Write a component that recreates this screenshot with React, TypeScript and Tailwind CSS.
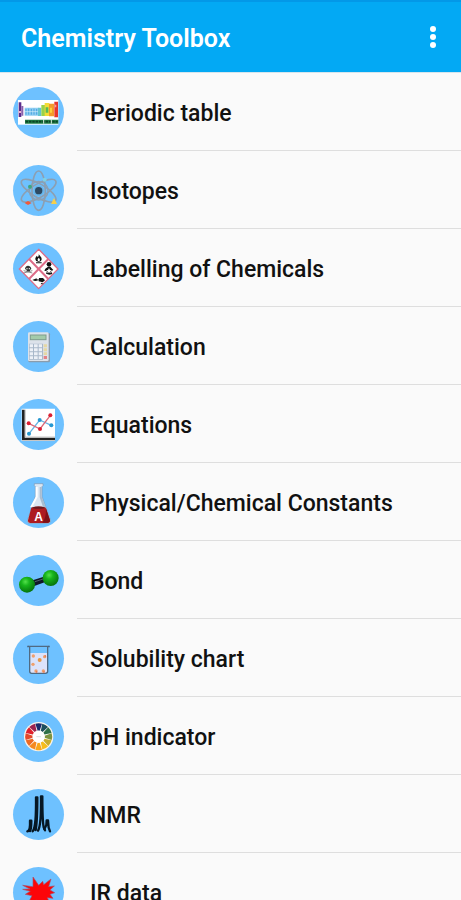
import type { ReactNode } from "react";

/* Every picture is drawn on a 153 x 153 canvas, clipped to its round badge. */

const atomAngles = [0, 60, 120];
const wheelColors = [
  "#1b2a6b", "#1d4f5c", "#2f7048", "#7d9440", "#c9ae2c", "#f6bd1c",
  "#f9a71a", "#f58a1f", "#ee6a22", "#e5482a", "#e0202c", "#9c2350",
];

const PeriodicTableArt = () => (
  <g>
    <rect x="15" y="39" width="121" height="74" fill="#fff" />
    <path d="M17 46h8v44h-8z" fill="#5b2c8c" />
    <path d="M25 57h6v29h-6z" fill="#8a63ad" />
    <path d="M18 72h6v6h-6z" fill="#f0b4d0" />
    <path d="M35 62h42v24H35z" fill="#8fcdf2" />
    <path d="M39 66v17M47 65v18M55 66v17M63 65v18M71 66v17" stroke="#4aa5e0" strokeWidth="3" />
    <path d="M35 74h40" stroke="#d8effc" strokeWidth="2" />
    <path d="M75 62h10v25H75z" fill="#64c4cf" />
    <path d="M85 54h12v33H85z" fill="#9bd24a" />
    <path d="M95 48h14v39H95z" fill="#f2dc37" />
    <path d="M98 61h8v16h-8z" fill="#58b957" />
    <path d="M108 50h15v38h-15z" fill="#f59a2a" />
    <path d="M111 62h6v15h-6z" fill="#fbd13c" />
    <path d="M124 44h11v47h-11z" fill="#e8352c" />
    <path d="M125 53h5v8h-5z" fill="#f9a08f" />
    <path d="M36 98h100v12H36z" fill="#1f7a45" />
    <path d="M38 104h96" stroke="#0b4225" strokeWidth="5" strokeDasharray="7 3" />
    <path d="M92 96v14M115 96v14" stroke="#d9efdf" strokeWidth="3" />
  </g>
);

const IsotopesArt = () => (
  <g fill="none">
    {atomAngles.map((angle) => (
      <ellipse key={angle} cx="77" cy="77" rx="20" ry="59" stroke="#8c9fb2" strokeWidth="5" transform={`rotate(${angle} 77 77)`} />
    ))}
    <circle cx="77" cy="77" r="28" stroke="#8c9fb2" strokeWidth="4" />
    <circle cx="77" cy="77" r="16" fill="#6ab5e8" />
    <circle cx="77" cy="77" r="11" fill="#2d4a63" />
    <circle cx="51" cy="65" r="6" fill="#3fa682" />
    <circle cx="95" cy="44" r="6" fill="#7fd0e6" />
    <path d="m35 114 10-6 11 6-11 6z" fill="#ef5a3c" />
    <path d="m123 99 9 18h-18z" fill="#f6cf4b" />
  </g>
);

const LabellingArt = () => (
  <g>
    <path d="m77 19 58 59-58 59-58-59z" fill="#fff" stroke="#dd6c88" strokeWidth="4" />
    <path d="m48 48 58 60M106 48l-58 60" stroke="#dd6c88" strokeWidth="6" />
    <path d="M77 32c2 7 9 9 9 16 0 5-3 8-9 8s-10-3-10-9c0-4 3-6 4-9 2 2 3 3 3 5 3-3 4-7 3-11z" fill="#111" />
    <path d="M74 50c0-3 2-4 3-6 2 2 4 4 4 7 0 2-2 3-4 3s-3-2-3-4z" fill="#fff" />
    <path d="M69 58h17v3H69z" fill="#111" />
    <path d="M36 78c0-6 4-10 9-10s10 4 10 10l-4 3v4H41v-4z" fill="#333" />
    <path d="m32 83 26 7M32 90l26-7" stroke="#555" strokeWidth="2" />
    <circle cx="42" cy="77" r="2" fill="#fff" /><circle cx="49" cy="77" r="2" fill="#fff" />
    <circle cx="108" cy="64" r="7" fill="#111" />
    <path d="m97 77 8-6h7l9 10-7 4 4 8-9 2-10-3 3-7-8-2z" fill="#111" />
    <path d="m108 75 3 6 6 1-5 3 1 6-5-3-5 3 1-6-5-3 6-1z" fill="#fff" />
    <path d="m58 111 13-5v3l9 1-9 3-5 1zM78 105h12l6 7-7 6-12-3z" fill="#111" />
    <path d="m85 119 8 4-10 1z" fill="#222" />
  </g>
);

const CalculationArt = () => (
  <g>
    <rect x="46" y="36" width="65" height="88" rx="4" fill="#8a9cac" />
    <rect x="45" y="34" width="62" height="86" rx="4" fill="#dce2ea" />
    <rect x="52" y="42" width="47" height="14" fill="#a3cbaa" stroke="#7e9c8b" strokeWidth="3" />
    <path d="M48 68h42v48H48z" fill="#a8b8ca" />
    <path d="M50 70h10v9H50zM63 70h11v9H63zM77 70h10v9H77zM50 82h10v9H50zM63 82h11v9H63zM77 82h10v9H77zM50 94h10v9H50zM63 94h11v9H63zM77 94h10v9H77zM50 106h10v8H50zM63 106h11v8H63zM77 106h10v8H77z" fill="#edf1f7" />
    <path d="M92 70h10v9H92zM92 82h10v9H92zM92 94h10v8H92z" fill="#e5d8a4" />
    <path d="M92 105h10v9H92z" fill="#e38286" />
  </g>
);

const EquationsArt = () => (
  <g>
    <path d="M26 29h100v97H26z" fill="#fff" />
    <path d="M31 32v88h95" fill="none" stroke="#222" strokeWidth="8" />
    <path d="M37 32v82h89" fill="none" stroke="#aaa" strokeWidth="2" />
    <path d="m48 104 32-41 35 16" fill="none" stroke="#67b5e4" strokeWidth="4" />
    <path d="m47 73 34 17 31-41" fill="none" stroke="#dc6877" strokeWidth="4" />
    <g fill="#2798d1"><circle cx="48" cy="104" r="6" /><circle cx="80" cy="63" r="6" /><circle cx="115" cy="79" r="6" /></g>
    <g fill="#dc2032"><circle cx="47" cy="73" r="6" /><circle cx="81" cy="90" r="6" /><circle cx="112" cy="49" r="6" /></g>
  </g>
);

const ConstantsArt = () => (
  <g>
    <path d="M64 20h26v6l-3 3v30l24 66q5 14-8 14H52q-12 0-7-14l22-66V29l-3-3z" fill="#dbe7f3" stroke="#8199b3" strokeWidth="2" />
    <path d="M68 30h6v30L58 91h-7l17-32z" fill="#fff" />
    <path d="M80 30h6v29l12 31h-8L80 61z" fill="#a9bdd1" />
    <path d="M55 92q22-7 43 0l12 34q4 12-7 12H52q-10 0-6-12z" fill="#ad1b20" />
    <path d="M56 92q20-7 42 0-21 7-42 0z" fill="#641a20" />
    <path d="m99 94 11 33q3 9-5 10H88q12-14 11-43z" fill="#7e1116" />
    <text x="77" y="132" textAnchor="middle" fontFamily="Liberation Sans, sans-serif" fontSize="36" fontWeight="700" fill="#fff">A</text>
  </g>
);

const BondArt = () => (
  <g>
    <defs>
      <radialGradient id="atom" cx="40%" cy="32%" r="70%">
        <stop offset="0" stopColor="#54e04b" /><stop offset=".35" stopColor="#18b51c" /><stop offset="1" stopColor="#05720b" />
      </radialGradient>
    </defs>
    <path d="m59 76 38-12v17L62 94z" fill="#111827" />
    <path d="m66 80 24-8" stroke="#53606d" strokeWidth="3" />
    <circle cx="42" cy="89" r="24" fill="url(#atom)" />
    <circle cx="113" cy="69" r="24" fill="url(#atom)" />
  </g>
);

const SolubilityArt = () => (
  <g>
    <path d="M49 60h54v53q0 7-6 7H55q-6 0-6-7z" fill="#dce3fb" />
    <path d="M46 40h61M50 41v74q0 6 6 6h41q7 0 7-6V41" fill="none" stroke="#506a82" strokeWidth="4" />
    <path d="M45 38v5M108 38v5" stroke="#43566a" strokeWidth="4" />
    <g fill="#efa06e"><circle cx="80" cy="81" r="6" fill="#e99743" /><circle cx="61" cy="69" r="5" /><circle cx="95" cy="71" r="5" /><circle cx="60" cy="94" r="5" /><circle cx="69" cy="114" r="5" /><circle cx="91" cy="114" r="5" /></g>
    <g fill="#df6847"><circle cx="71" cy="117" r="2" /><circle cx="93" cy="117" r="2" /><circle cx="97" cy="69" r="2" /></g>
  </g>
);

const IndicatorArt = () => (
  <g>
    <circle cx="77" cy="77" r="44" fill="#f7f4ef" />
    {wheelColors.map((color, index) => (
      <path key={color} d="m74 59-7-21q10-3 20 0l-7 21q-3-1-6 0z" fill={color} transform={`rotate(${index * 30} 77 77)`} />
    ))}
    <circle cx="77" cy="77" r="18" fill="#fff" />
    <path d="M70 77h14" stroke="#c9cfd3" strokeWidth="2" />
  </g>
);

const NmrArt = () => (
  <g fill="none" stroke="#061724" strokeLinecap="round" strokeLinejoin="round">
    <path d="M43 127q9-2 8-32h4q0 25-4 31M59 127q11-12 10-102h4q0 72-5 98" strokeWidth="7" />
    <path d="M75 125q10-14 9-103h4q0 72 4 93l4 9" strokeWidth="7" />
    <path d="m94 120 6-12 1-14h4l2 22 4 11" strokeWidth="7" />
  </g>
);

const IrArt = () => (
  <path d="m60 30 17 25 12-12 3 10 22-17-7 23 17-2-13 12 14 8-14 5 9 12-17-2 10 23-24-15-9 28-10-29-27 14 14-27-20-4 15-9-23-6 22-1-22-11 31 4z" fill="#fc0509" stroke="#a94f67" strokeWidth="2" />
);

const tools: { label: string; art: ReactNode }[] = [
  { label: "Periodic table", art: <PeriodicTableArt /> },
  { label: "Isotopes", art: <IsotopesArt /> },
  { label: "Labelling of Chemicals", art: <LabellingArt /> },
  { label: "Calculation", art: <CalculationArt /> },
  { label: "Equations", art: <EquationsArt /> },
  { label: "Physical/Chemical Constants", art: <ConstantsArt /> },
  { label: "Bond", art: <BondArt /> },
  { label: "Solubility chart", art: <SolubilityArt /> },
  { label: "pH indicator", art: <IndicatorArt /> },
  { label: "NMR", art: <NmrArt /> },
  { label: "IR data", art: <IrArt /> },
];

export default function App() {
  return (
    <div className="min-h-screen bg-[#fafafa] font-[Roboto,sans-serif] font-medium text-[#111]">
      <header className="flex h-[73px] items-center justify-between border-t-2 border-b border-t-[#0398e8] border-b-[#d5e5ed] bg-[#03a9f4] pr-3 pl-[21px] text-white">
        <h1 className="pt-1 text-[25px] leading-8 font-semibold">Chemistry Toolbox</h1>
        <button type="button" aria-label="More options" className="flex h-10 w-8 items-center justify-center">
          <svg viewBox="0 0 8 24" className="h-6 w-2" fill="currentColor" aria-hidden="true">
            <circle cx="4" cy="4" r="3" /><circle cx="4" cy="12" r="3" /><circle cx="4" cy="20" r="3" />
          </svg>
        </button>
      </header>
      <main>
        <ul>
          {tools.map(({ label, art }) => (
            <li key={label}>
              <button type="button" className="flex h-[78px] w-full items-center gap-[13px] pl-[13px] text-left">
                <span className="size-[51px] shrink-0 overflow-hidden rounded-full bg-[#6ec1ff]">
                  <svg viewBox="0 0 153 153" className="size-full" aria-hidden="true">{art}</svg>
                </span>
                <span className="flex h-full min-w-0 flex-1 items-center border-b border-[#dedede] pt-1 pl-[13px] text-[23px] leading-7">{label}</span>
              </button>
            </li>
          ))}
        </ul>
      </main>
    </div>
  );
}
